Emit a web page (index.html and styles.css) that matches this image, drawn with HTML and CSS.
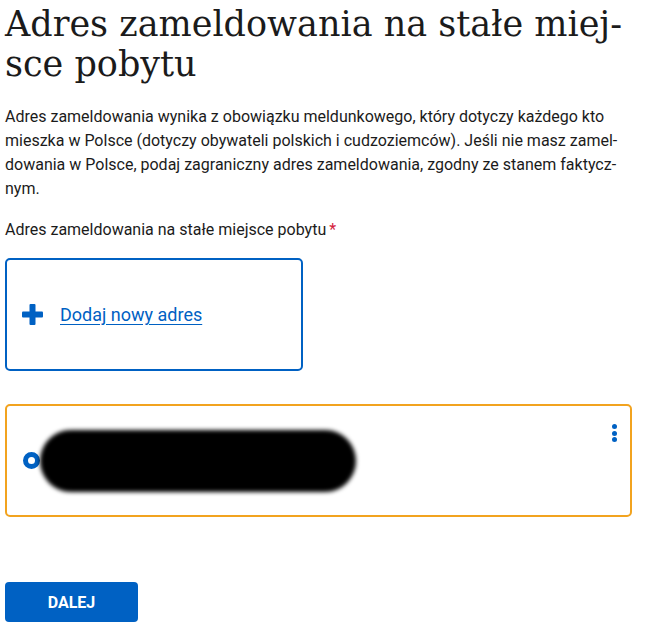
FILE: index.html
```html
<!DOCTYPE html>
<html lang="pl">
<head>
<meta charset="utf-8">
<title>Adres zameldowania</title>
<link rel="stylesheet" href="styles.css">
</head>
<body>
<main class="page">
  <h1 class="title">Adres zameldowania na stałe miej&shy;sce pobytu</h1>
  <p class="intro">Adres zameldowania wynika z obowiązku meldunkowego, który dotyczy każdego kto mieszka w Polsce (dotyczy obywateli polskich i cudzoziemców). Jeśli nie masz zamel&shy;dowania w Polsce, podaj zagraniczny adres zameldowania, zgodny ze stanem faktycz&shy;nym.</p>
  <div class="field-label">Adres zameldowania na stałe miejsce pobytu<span class="req">*</span></div>

  <div class="add-card">
    <svg class="plus" width="21" height="21" viewBox="0 0 21 21" aria-hidden="true">
      <rect x="7.5" y="0" width="6" height="21" rx="1" fill="#0061c3"/>
      <rect x="0" y="7.5" width="21" height="6" rx="1" fill="#0061c3"/>
    </svg>
    <a class="add-link" href="#">Dodaj nowy adres</a>
  </div>

  <div class="addr-card">
    <span class="radio"></span>
    <span class="redacted"></span>
    <button class="kebab" aria-label="Więcej opcji">
      <span class="dot"></span><span class="dot"></span><span class="dot"></span>
    </button>
  </div>

  <button class="next">DALEJ</button>
</main>
</body>
</html>
```

FILE: styles.css
```css
html, body {
  margin: 0;
  padding: 0;
  background: #ffffff;
}

body {
  font-family: Roboto, "Liberation Sans", sans-serif;
  color: #1b1b1b;
}

.page {
  width: 627px;
  padding: 4px 0 0 5px;
}

.title {
  font-family: "DejaVu Serif", serif;
  font-stretch: normal;
  font-weight: 400;
  font-size: 35px;
  line-height: 40px;
  margin: 0;
  color: #1b1b1b;
}

.intro {
  font-size: 16px;
  line-height: 24px;
  margin: 21px 0 0;
}

.field-label {
  font-size: 16px;
  line-height: 24px;
  margin-top: 17px;
}

.req {
  color: #d4213d;
  margin-left: 3px;
}

.add-card {
  box-sizing: border-box;
  width: 298px;
  height: 113px;
  margin-top: 16px;
  border: 2px solid #0061c3;
  border-radius: 5px;
  display: flex;
  align-items: center;
  padding-left: 15px;
  gap: 17px;
}

.plus {
  display: block;
  flex: none;
}

.add-link {
  font-size: 18px;
  color: #0061c3;
  text-decoration: underline;
  text-underline-offset: 3px;
}

.addr-card {
  box-sizing: border-box;
  width: 627px;
  height: 113px;
  margin-top: 33px;
  border: 2px solid #f2a31f;
  border-radius: 5px;
  display: flex;
  align-items: center;
  padding-left: 16px;
  position: relative;
}

.radio {
  box-sizing: border-box;
  width: 17px;
  height: 17px;
  border: 5.5px solid #0061c3;
  border-radius: 50%;
  flex: none;
}

.redacted {
  display: block;
  width: 316px;
  height: 62px;
  background: #000;
  border-radius: 31px;
  filter: blur(2px);
  flex: none;
}

.kebab {
  position: absolute;
  top: 18px;
  right: 13px;
  border: 0;
  background: none;
  padding: 0;
  display: flex;
  flex-direction: column;
  gap: 1.5px;
}

.dot {
  display: block;
  width: 5px;
  height: 5px;
  border-radius: 50%;
  background: #0061c3;
}

.next {
  display: block;
  margin-top: 65px;
  width: 133px;
  height: 40px;
  border: 0;
  border-radius: 4px;
  background: #0061c3;
  color: #fff;
  font-family: Roboto, "Liberation Sans", sans-serif;
  font-weight: 700;
  font-size: 16px;
  cursor: pointer;
}
```
